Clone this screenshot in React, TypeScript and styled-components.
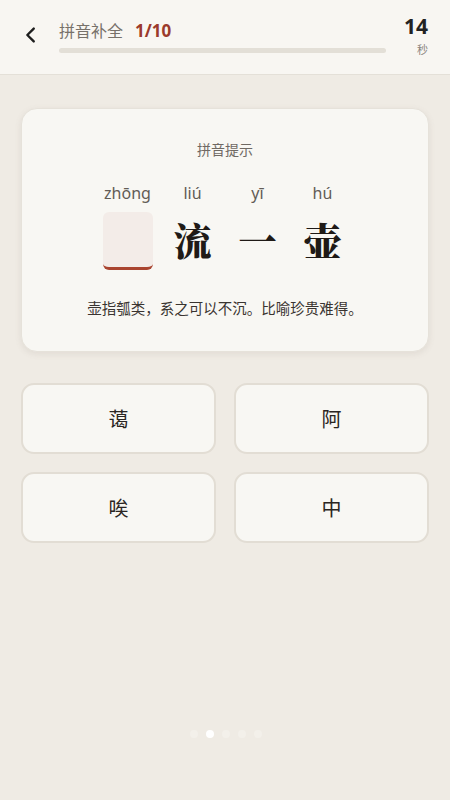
import * as React from 'react';
import styled, { createGlobalStyle } from 'styled-components';

const GlobalStyle = createGlobalStyle`
  html, body {
    margin: 0;
    padding: 0;
    background: #efebe4;
  }
  body {
    font-family: "Noto Sans", "Noto Sans CJK SC", sans-serif;
  }
`;

const Page = styled.div`
  width: 450px;
  height: 800px;
  display: flex;
  flex-direction: column;
  background: #efebe4;
`;

const Header = styled.div`
  height: 75px;
  display: flex;
  align-items: center;
  padding: 0 22px 0 18px;
  background: #f8f6f2;
  border-bottom: 1px solid #e4e0d8;
  box-sizing: border-box;
`;

const BackButton = styled.div`
  width: 26px;
  height: 26px;
  display: flex;
  align-items: center;
  justify-content: center;
  margin-right: 15px;
  margin-top: -4px;
`;

const HeaderMain = styled.div`
  flex: 1;
  display: flex;
  flex-direction: column;
  gap: 6px;
  margin-top: -3px;
`;

const TitleRow = styled.div`
  display: flex;
  align-items: baseline;
  gap: 12px;
`;

const Title = styled.span`
  font-family: "Noto Sans CJK SC", sans-serif;
  font-size: 16px;
  color: #77716a;
`;

const Count = styled.span`
  font-family: "Noto Sans", "Noto Sans CJK SC", sans-serif;
  font-size: 17px;
  font-weight: 700;
  color: #9b3a2c;
`;

const Track = styled.div`
  width: 327px;
  height: 5px;
  border-radius: 3px;
  background: #e3dfd7;
`;

const Timer = styled.div`
  display: flex;
  flex-direction: column;
  align-items: flex-end;
  margin-left: 16px;
  margin-top: -4px;
`;

const Seconds = styled.span`
  font-family: "Noto Sans", sans-serif;
  font-size: 21px;
  font-weight: 700;
  color: #222;
  line-height: 26px;
`;

const Unit = styled.span`
  font-family: "Noto Sans CJK SC", sans-serif;
  font-size: 11px;
  color: #8a847d;
  margin-top: 2px;
`;

const Body = styled.div`
  flex: 1;
  display: flex;
  flex-direction: column;
  padding: 33px 21px 0 21px;
`;

const Card = styled.div`
  background: #f8f7f3;
  border-radius: 16px;
  border: 1px solid #e6e2da;
  box-shadow: 0 2px 6px rgba(120, 110, 95, 0.12);
  padding: 30px 0 33px;
  display: flex;
  flex-direction: column;
  align-items: center;
`;

const CardLabel = styled.div`
  font-family: "Noto Sans CJK SC", sans-serif;
  font-size: 14px;
  color: #6f6963;
`;

const Idiom = styled.div`
  display: flex;
  gap: 15px;
  margin-top: 24px;
`;

const Column = styled.div`
  width: 50px;
  display: flex;
  flex-direction: column;
  align-items: center;
`;

const Pinyin = styled.span`
  font-family: "Noto Sans", sans-serif;
  font-size: 16px;
  color: #625c56;
  line-height: 20px;
`;

const Char = styled.span`
  margin-top: 6px;
  height: 58px;
  display: flex;
  align-items: center;
  font-family: "Noto Serif CJK SC", "Noto Sans CJK SC", serif;
  font-size: 38px;
  font-weight: 900;
  color: #1f1a16;
`;

const Blank = styled.div`
  margin-top: 9px;
  width: 50px;
  height: 58px;
  border-radius: 6px;
  background: #f3ece8;
  border-bottom: 3px solid #a9442f;
  box-sizing: border-box;
`;

const Meaning = styled.div`
  margin-top: 27px;
  font-family: "Noto Sans CJK SC", sans-serif;
  font-size: 14.5px;
  color: #3a3430;
`;

const Options = styled.div`
  display: grid;
  grid-template-columns: 1fr 1fr;
  column-gap: 18px;
  row-gap: 18px;
  margin-top: 31px;
`;

const Option = styled.div`
  height: 71px;
  border-radius: 13px;
  background: #f8f7f3;
  border: 2px solid #e2ddd4;
  box-sizing: border-box;
  display: flex;
  align-items: center;
  justify-content: center;
  font-family: "Noto Sans CJK SC", sans-serif;
  font-size: 20px;
  color: #2a2522;
`;

const Dots = styled.div`
  margin-top: auto;
  margin-bottom: 62px;
  display: flex;
  justify-content: center;
  gap: 8px;
  padding-left: 2px;
`;

const Dot = styled.span<{ $active?: boolean }>`
  width: 8px;
  height: 8px;
  border-radius: 50%;
  background: ${p => (p.$active ? '#ffffff' : '#f3f0ea')};
`;

const columns = [
  { py: 'zhōng', ch: '' },
  { py: 'liú', ch: '流' },
  { py: 'yī', ch: '一' },
  { py: 'hú', ch: '壶' },
];

const choices = ['蔼', '阿', '唉', '中'];

export default function App() {
  return (
    <Page>
      <GlobalStyle />
      <Header>
        <BackButton>
          <svg width="22" height="22" viewBox="0 0 24 24" fill="none" stroke="#1e1e1e" strokeWidth="2.6" strokeLinecap="round" strokeLinejoin="round">
            <path d="M15 5l-7 7 7 7" />
          </svg>
        </BackButton>
        <HeaderMain>
          <TitleRow>
            <Title>拼音补全</Title>
            <Count>1/10</Count>
          </TitleRow>
          <Track />
        </HeaderMain>
        <Timer>
          <Seconds>14</Seconds>
          <Unit>秒</Unit>
        </Timer>
      </Header>
      <Body>
        <Card>
          <CardLabel>拼音提示</CardLabel>
          <Idiom>
            {columns.map(c => (
              <Column key={c.py}>
                <Pinyin>{c.py}</Pinyin>
                {c.ch ? <Char>{c.ch}</Char> : <Blank />}
              </Column>
            ))}
          </Idiom>
          <Meaning>壶指瓠类，系之可以不沉。比喻珍贵难得。</Meaning>
        </Card>
        <Options>
          {choices.map(c => (
            <Option key={c}>{c}</Option>
          ))}
        </Options>
        <Dots>
          <Dot />
          <Dot $active />
          <Dot />
          <Dot />
          <Dot />
        </Dots>
      </Body>
    </Page>
  );
}
